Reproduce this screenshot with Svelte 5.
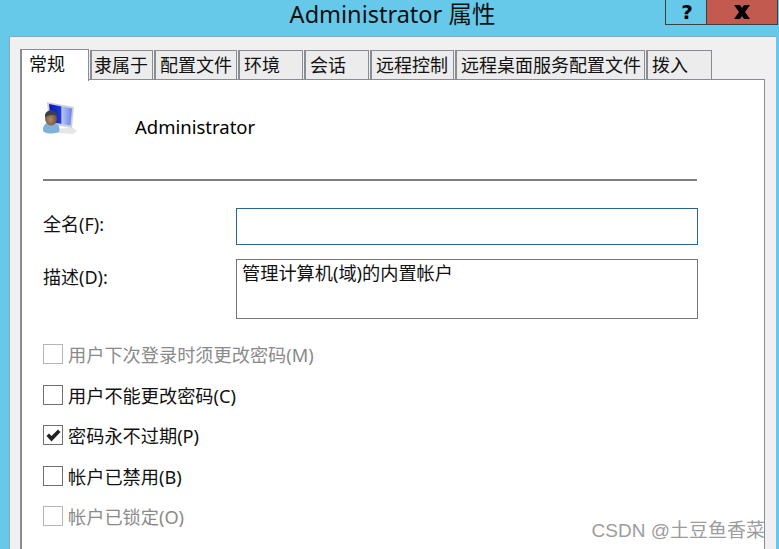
<script>
  const tabs = [
    ['常规', 69], ['隶属于', 63], ['配置文件', 83], ['环境', 65], ['会话', 65], ['远程控制', 84], ['远程桌面服务配置文件', 190], ['拨入', 66]
  ];
  const checks = [
    { t: '用户下次登录时须更改密码(M)', dis: true },
    { t: '用户不能更改密码(C)' },
    { t: '密码永不过期(P)', on: true },
    { t: '帐户已禁用(B)' },
    { t: '帐户已锁定(O)', dis: true }
  ];
</script>

<div class="screen">
  <header class="titlebar">
    <h1>Administrator 属性</h1>
    <div class="controls">
      <div class="btn help">?</div>
      <div class="btn close">
        <svg width="20" height="14" viewBox="0 0 20 14"><path d="M2 0h6l2 3 2-3h6l-5 7 5 7h-6l-2-3-2 3H2l5-7z" fill="#000"/></svg>
      </div>
    </div>
  </header>
  <main class="dialog">
    <nav class="tabs">
      {#each tabs as [name, w], i}
        <div class="tab" class:active={i === 0} class:second={i === 1} style="width:{w}px">{name}</div>
      {/each}
    </nav>
    <section class="pane">
      <div class="user">
        <svg class="icon" width="34" height="34" viewBox="0 0 34 34">
          <defs>
            <linearGradient id="scr" x1="0" y1="0" x2="1" y2="0">
              <stop offset="0" stop-color="#0a18b8"/><stop offset="0.5" stop-color="#1e36d4"/><stop offset="0.56" stop-color="#b6c4f6"/><stop offset="1" stop-color="#6a82e8"/>
            </linearGradient>
            <radialGradient id="skin" cx="0.45" cy="0.6" r="0.6">
              <stop offset="0" stop-color="#b08a6c"/><stop offset="1" stop-color="#6b4a36"/>
            </radialGradient>
          </defs>
          <path d="M14 28l15-2 5 4-4 3-16-1z" fill="#e6e6e6"/>
          <path d="M4 1l27 5-2 21L6 23z" fill="#ccd2da"/>
          <path d="M6 3l23 4.500-1.500 17L8 21z" fill="url(#scr)"/>
          <path d="M0 29c0-5 3-7 5-7.500h6c3 .5 6 3 5.500 8 0 2-4 3-8.500 3-5 0-8-1.500-8-3.500z" fill="#7fb2d8"/>
          <ellipse cx="8" cy="17" rx="6" ry="7.500" fill="url(#skin)"/>
          <path d="M2 16c-.5-5 3-6.500 6-6.500s6 1.500 6 5c-3-1-6-1-8 0-2 .5-3 1-4 1.500z" fill="#3b3f48"/>
        </svg>
        <span class="uname">Administrator</span>
      </div>
      <hr />
      <div class="field f1">
        <span class="label">全名(F):</span>
        <div class="input focus"></div>
      </div>
      <div class="field f2">
        <span class="label">描述(D):</span>
        <div class="input area">管理计算机(域)的内置帐户</div>
      </div>
      <ul class="checks">
        {#each checks as c}
          <li class:dis={c.dis}>
            <span class="box">
              {#if c.on}
                <svg width="15" height="13" viewBox="0 0 15 13"><path d="M0.500 7l2.500-2.500L5.500 7 12 0.500 14.500 3 5.500 12.500z" fill="#222"/></svg>
              {/if}
            </span>
            {c.t}
          </li>
        {/each}
      </ul>
    </section>
    <div class="mark">CSDN @土豆鱼香菜</div>
  </main>
</div>

<style>
  :global(body) { margin: 0; }
  .screen {
    width: 779px; height: 549px; overflow: hidden; background: #66c9ea;
    font-family: "Noto Sans", "Noto Sans CJK SC", sans-serif; font-size: 18px; color: #000;
    position: relative;
  }
  .titlebar { height: 36px; position: relative; display: flex; justify-content: center; padding-left: 6px; box-sizing: border-box; }
  h1 { margin: 0; font-weight: 400; font-size: 23.500px; line-height: 29px; color: #111; }
  .controls { position: absolute; left: 665px; top: 0; display: flex; height: 25px; }
  .btn { height: 24px; border: 1px solid #3e3e3e; border-top: 0; box-sizing: content-box; display: flex; align-items: center; justify-content: center; }
  .help { width: 41px; font: 700 20px/20px "DejaVu Sans", sans-serif; border-right: 0; padding-left: 2px; box-sizing: border-box; height: 25px; }
  .close { width: 70px; background: #c25a50; }
  .dialog {
    position: relative; margin: 0 3px 0 9px; height: 513px; box-sizing: border-box;
    background: #f0f0f0; border-top: 1px solid #8fa6b8; border-left: 1px solid #8fa6b8; padding: 12px 10px 0 10px;
  }
  .tabs { display: flex; align-items: flex-end; height: 31px; position: relative; z-index: 1; }
  .tab {
    box-sizing: border-box; height: 29px; margin-right: 1px; background: #ececec;
    border: 1px solid #898c95; border-bottom: 0; border-left-width: 2px; line-height: 29px; padding-left: 4px; white-space: nowrap;
    color: #111; margin-bottom: 1px;
  }
  .tab.second { padding-left: 2px; }
  .tab.active { height: 32px; margin-bottom: -1px; background: #fff; line-height: 28px; padding-left: 7px; padding-bottom: 4px; }
  .pane {
    background: #fff; border: 1px solid #898c95; border-left-width: 2px; border-bottom: 0; height: 470px; box-sizing: border-box;
    padding: 0 21px; width: 745px; margin-top: -1px;
  }
  .user { display: flex; align-items: center; height: 53px; padding-top: 21px; }
  .icon { margin-top: -20px; }
  .uname { margin-left: 58px; margin-top: -2px; font-size: 18.500px; }
  hr { border: 0; border-top: 2px solid #7f7f7f; margin: 25px 0 0; width: 654px; }
  .field { display: flex; align-items: flex-start; }
  .f1 { margin-top: 27px; }
  .f2 { margin-top: 14px; }
  .label { width: 193px; line-height: 32px; color: #111; }
  .f2 .label { line-height: 36px; }
  .input { width: 462px; box-sizing: border-box; border: 1px solid #767676; height: 60px; }
  .focus { height: 37px; border: 1px solid #2a6496; }
  .area { padding: 0 5px; line-height: 27px; color: #111; font-size: 18.200px; }
  .checks { list-style: none; margin: 15px 0 0; padding: 0; }
  .checks li { display: flex; align-items: center; gap: 5px; height: 40.500px; color: #111; font-size: 18.200px; }
  .checks li.dis { color: #8a8a8a; }
  .box { width: 20px; height: 20px; box-sizing: border-box; border: 1px solid #707070; background: #fff; display: flex; align-items: center; justify-content: center; }
  .dis .box { border-color: #b5b5b5; }
  .mark { position: absolute; right: 11px; bottom: 6px; color: #9c9c9c; font-family: "Liberation Sans", "Noto Sans CJK SC", sans-serif; font-size: 19px; line-height: 24px; }
</style>
